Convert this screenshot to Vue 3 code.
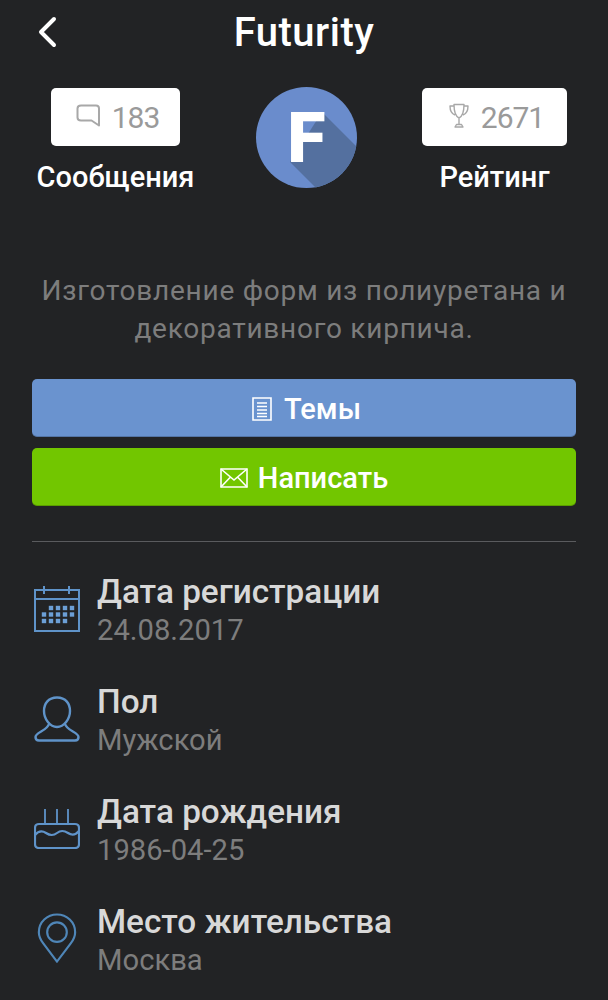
<script setup>
const details = [
  { icon: 'calendar', title: 'Дата регистрации', value: '24.08.2017' },
  { icon: 'user', title: 'Пол', value: 'Мужской' },
  { icon: 'cake', title: 'Дата рождения', value: '1986-04-25' },
  { icon: 'pin', title: 'Место жительства', value: 'Москва' }
]

// клетки сетки в календаре
const calendarDots = [
  [17, 22], [24, 22], [31, 22], [38, 22],
  [10, 28.5], [17, 28.5], [24, 28.5], [31, 28.5], [38, 28.5],
  [10, 35], [17, 35], [24, 35], [31, 35]
].map(([x, y]) => ({ x, y }))
</script>

<template>
  <div class="page">
    <header class="topbar">
      <svg class="back" width="20" height="32" viewBox="0 0 20 32">
        <path d="M17 3 L4 16 L17 29" fill="none" stroke="#fff" stroke-width="4" stroke-linecap="round" stroke-linejoin="round" />
      </svg>
      <h1 class="title">Futurity</h1>
    </header>

    <section class="stats">
      <div class="stat stat-left">
        <div class="stat-box">
          <svg width="24" height="23" viewBox="0 0 24 23">
            <path d="M5 1.500 H20 Q23 1.500 23 4.500 V21.500 L15.500 16.500 H5 Q1.500 16.500 1.500 13.500 V4.500 Q1.500 1.500 5 1.500 Z" fill="none" stroke="#a8a8a8" stroke-width="2" stroke-linejoin="round" />
          </svg>
          <span>183</span>
        </div>
        <div class="stat-label">Сообщения</div>
      </div>

      <div class="avatar">
        <svg class="avatar-shadow" width="101" height="101" viewBox="0 0 101 101">
          <polygon points="34,75 66,25 101,60 101,101 60,101" fill="#54709f" />
        </svg>
        <span class="avatar-letter">F</span>
      </div>

      <div class="stat stat-right">
        <div class="stat-box">
          <svg width="20" height="25" viewBox="0 0 20 25">
            <path d="M5 1.500 H15 C15 8 14 13 10 15 C6 13 5 8 5 1.500 Z M5 3 H1 C1 8 3 11 6 12 M15 3 H19 C19 8 17 11 14 12 M10 15 V21 M6 24 H14 L12.500 21.500 H7.500 Z" fill="none" stroke="#a8a8a8" stroke-width="1.400" stroke-linejoin="round" />
          </svg>
          <span>2671</span>
        </div>
        <div class="stat-label">Рейтинг</div>
      </div>
    </section>

    <p class="about">Изготовление форм из полиуретана и<br>декоративного кирпича.</p>

    <div class="actions">
      <button class="btn btn-blue">
        <svg width="20" height="24" viewBox="0 0 20 24">
          <path d="M1 1 H19 V23 H1 Z" fill="none" stroke="#fff" stroke-width="1.600" />
          <path d="M5 6 H15 M5 9.500 H15 M5 13 H15 M5 16.500 H15 M5 19.500 H15" fill="none" stroke="#fff" stroke-width="1.400" />
        </svg>
        <span>Темы</span>
      </button>
      <button class="btn btn-green">
        <svg width="28" height="20" viewBox="0 0 28 20">
          <path d="M1 1 H27 V19 H1 Z" fill="none" stroke="#fff" stroke-width="1.600" />
          <path d="M1 1 L14 12 L27 1 M1 19 L10.500 9 M27 19 L17.500 9" fill="none" stroke="#fff" stroke-width="1.600" />
        </svg>
        <span>Написать</span>
      </button>
    </div>

    <hr class="divider">

    <ul class="details">
      <li v-for="item in details" :key="item.title" class="detail">
        <div class="detail-icon">
          <svg v-if="item.icon === 'calendar'" width="46" height="46" viewBox="0 0 46 46" fill="none" stroke="#5f93c9" stroke-width="2">
            <path d="M1 4 H45 V45 H1 Z M1 13 H45 M10 0 V8 M35 0 V8" />
            <rect v-for="(d, i) in calendarDots" :key="i" :x="d.x - 2.200" :y="d.y - 2.200" width="4.400" height="4.400" fill="#6c9fd6" stroke="none" />
          </svg>
          <svg v-else-if="item.icon === 'user'" width="46" height="46" viewBox="0 0 46 46" fill="none" stroke="#5f93c9" stroke-width="2.400">
            <path d="M23 1.500 C32 1.500 36 8 36 15 C36 23 30 31 23 31 C16 31 10 23 10 15 C10 8 14 1.500 23 1.500 Z" />
            <path d="M15 28 C13 35 1.500 36 1.500 41 Q1.500 44.500 5 44.500 H41 Q44.500 44.500 44.500 41 C44.500 36 33 35 31 28" />
          </svg>
          <svg v-else-if="item.icon === 'cake'" width="46" height="40" viewBox="0 0 46 40" fill="none" stroke="#5f93c9" stroke-width="2.200">
            <path d="M11 0 V15 M23 0 V15 M34 0 V15" stroke-width="1.800" />
            <path d="M5 15 H41 Q45 15 45 19 V35 Q45 39 41 39 H5 Q1 39 1 35 V19 Q1 15 5 15 Z" />
            <path d="M1 26 Q6 20 12 24 T23 24 T34 24 T45 22" />
          </svg>
          <svg v-else width="40" height="51" viewBox="0 0 40 52" fill="none" stroke="#4f86b8" stroke-width="2.200">
            <path d="M20 49.500 L6 31 C3 27 1.500 23 1.500 19.500 C1.500 9 10 1.500 20 1.500 C30 1.500 38.500 9 38.500 19.500 C38.500 23 37 27 34 31 Z" />
            <circle cx="20" cy="19.500" r="10" />
          </svg>
        </div>
        <div class="detail-text">
          <div class="detail-title">{{ item.title }}</div>
          <div class="detail-value">{{ item.value }}</div>
        </div>
      </li>
    </ul>
  </div>
</template>

<style>
html, body {
  margin: 0;
  background: #222325;
}
</style>

<style scoped>
.page {
  height: 1000px;
  overflow: hidden;
  background: #222325;
  font-family: Roboto, "Noto Sans", sans-serif;
  box-sizing: border-box;
}

.topbar {
  position: relative;
  height: 87px;
  padding-top: 9px;
  box-sizing: border-box;
  text-align: center;
}

.back {
  position: absolute;
  left: 37px;
  top: 16px;
}

.title {
  margin: 0;
  font-size: 40px;
  line-height: 48px;
  font-weight: 500;
  letter-spacing: 0.5px;
  color: #fff;
}

.stats {
  display: flex;
  align-items: flex-start;
  height: 105px;
  padding-left: 37px;
}

.stat {
  display: flex;
  flex-direction: column;
  align-items: center;
}

.stat-left {
  width: 157px;
}

.stat-right {
  width: 145px;
}

.stat-box {
  display: flex;
  align-items: center;
  justify-content: center;
  gap: 12px;
  height: 58px;
  margin-top: 1px;
  padding-left: 4px;
  box-sizing: border-box;
  background: #fff;
  border-radius: 5px;
  color: #9a9a9a;
  font-size: 30px;
  letter-spacing: -1px;
}

.stat-box svg {
  margin-bottom: 4px;
}

.stat-left .stat-box {
  width: 129px;
}

.stat-right .stat-box {
  width: 145px;
}

.stat-label {
  margin-top: 14px;
  font-size: 29px;
  line-height: 34px;
  font-weight: 500;
  color: #fff;
  white-space: nowrap;
}

.avatar {
  position: relative;
  flex: none;
  width: 101px;
  height: 101px;
  margin: 0 65px 0 62px;
  border-radius: 50%;
  background: #6a8ccc;
  overflow: hidden;
  display: flex;
  align-items: center;
  justify-content: center;
}

.avatar-shadow {
  position: absolute;
  left: 0;
  top: 0;
}

.avatar-letter {
  position: relative;
  font-family: Roboto, sans-serif;
  font-weight: 900;
  font-size: 70px;
  line-height: 70px;
  color: #fff;
}

.about {
  margin: 80px 0 0;
  text-align: center;
  font-size: 28px;
  line-height: 38px;
  color: #7d7d7d;
  letter-spacing: 0.75px;
}

.actions {
  display: flex;
  flex-direction: column;
  gap: 11px;
  margin: 31px 32px 0;
}

.btn {
  display: flex;
  align-items: center;
  justify-content: center;
  gap: 13px;
  height: 58px;
  border: none;
  border-radius: 5px;
  padding: 2px 0 0;
  box-shadow: inset 0 -1px 0 rgba(0, 0, 0, 0.2);
  color: #fff;
  font-family: inherit;
  font-size: 29px;
  font-weight: 500;
}

.btn-blue {
  background: #6a93cf;
  padding-left: 5px;
  gap: 12px;
}

.btn-green {
  background: #72c600;
  gap: 10px;
}

.divider {
  margin: 35px 32px 0;
  border: none;
  border-top: 1px solid #5a5b5e;
}

.details {
  list-style: none;
  margin: 0;
  padding: 14px 0 0 32px;
}

.detail {
  display: flex;
  align-items: center;
  height: 110px;
}

.detail-icon {
  flex: none;
  width: 65px;
  display: flex;
  justify-content: center;
  padding: 0 15px 5px 0;
  box-sizing: border-box;
}

.detail-title {
  font-size: 33.3px;
  line-height: 38px;
  font-weight: 500;
  color: #d8d8d8;
}

.detail-value {
  font-size: 29.2px;
  line-height: 38px;
  color: #7d7d7d;
}
</style>
